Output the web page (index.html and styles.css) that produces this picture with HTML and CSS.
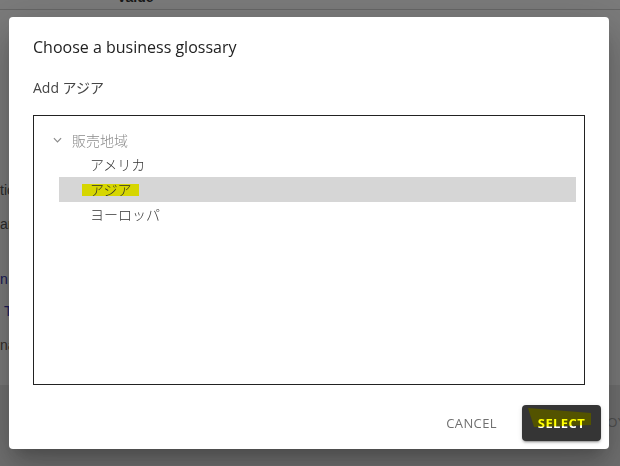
FILE: index.html
```html
<!DOCTYPE html>
<html lang="en">
<head>
<meta charset="utf-8">
<title>Choose a business glossary</title>
<link rel="stylesheet" href="styles.css">
</head>
<body>
<div class="page">
  <div class="table-head"><span class="col-value">Value</span></div>
  <div class="main">
    <div class="side">
      <span class="frag frag-1">tion</span>
      <span class="frag frag-2">ary</span>
      <span class="frag frag-3 link">n</span>
      <span class="frag frag-4 link">&nbsp;Type</span>
      <span class="frag frag-5">name</span>
    </div>
  </div>
  <div class="footer"><span class="deploy">DEPLOY</span></div>
</div>

<div class="overlay">
  <div class="dialog" role="dialog">
    <h2 class="dialog-title">Choose a business glossary</h2>
    <div class="dialog-content">
      <p class="add-line">Add アジア</p>
      <div class="tree">
        <div class="tree-parent">
          <svg class="chevron" viewBox="0 0 10 6" width="9" height="6"><path d="M1 1 L5 5 L9 1" fill="none" stroke="#8a8a8a" stroke-width="1.3"/></svg>
          <span>販売地域</span>
        </div>
        <div class="tree-children">
          <div class="tree-item">アメリカ</div>
          <div class="tree-item selected"><span class="mark">アジア</span></div>
          <div class="tree-item">ヨーロッパ</div>
        </div>
      </div>
    </div>
    <div class="dialog-actions">
      <button class="btn-text">CANCEL</button>
      <button class="btn-primary"><span class="btn-label">SELECT</span></button>
    </div>
  </div>
</div>
</body>
</html>
```

FILE: styles.css
```css
* { box-sizing: border-box; }

html, body {
  margin: 0;
  padding: 0;
  width: 620px;
  height: 466px;
  overflow: hidden;
}

body {
  font-family: "Liberation Sans", Arial, sans-serif;
  background: #f6f6f6;
}

/* ---------- underlying page ---------- */
.page {
  display: flex;
  flex-direction: column;
  height: 466px;
}

.table-head {
  height: 10px;
  border-bottom: 1px solid #cccccc;
  background: #f6f6f6;
  overflow: visible;
}

.col-value {
  display: block;
  margin-top: -11px;
  padding-left: 117px;
  font-size: 14px;
  line-height: 16px;
  font-weight: bold;
  color: #333;
}

.main {
  height: 375px;
  background: #f6f6f6;
}

.side {
  display: flex;
  flex-direction: column;
  align-items: flex-start;
  font-size: 14px;
  line-height: 16px;
  color: #555;
}

.frag { display: block; }
.frag-1 { margin-top: 172px; }
.frag-2 { margin-top: 18px; }
.frag-3 { margin-top: 39px; }
.frag-4 { margin-top: 16px; }
.frag-5 { margin-top: 18px; color: #6a5a50; }
.link { color: #3434b0; }

.footer {
  flex: 1;
  background: #e2e2e2;
  padding-left: 572px;
  padding-top: 28px;
  white-space: nowrap;
}

.deploy {
  font-size: 13px;
  line-height: 16px;
  color: #a2a2a2;
  letter-spacing: 0.3px;
}

/* ---------- modal ---------- */
.overlay {
  position: fixed;
  inset: 0;
  background: rgba(0, 0, 0, 0.5);
  display: flex;
  align-items: flex-start;
  padding: 17px 0 0 9px;
}

.dialog {
  width: 600px;
  height: 432px;
  background: #fff;
  border-radius: 4px;
  display: flex;
  flex-direction: column;
  box-shadow: 0 11px 15px -7px rgba(0,0,0,0.2),
              0 24px 38px 3px rgba(0,0,0,0.14),
              0 9px 46px 8px rgba(0,0,0,0.12);
  font-family: "Open Sans", "Noto Sans CJK JP", sans-serif;
}

.dialog-title {
  margin: 0;
  padding: 18px 24px 0;
  font-size: 16px;
  line-height: 24px;
  font-weight: 500;
  color: #222;
  height: 42px;
}

.dialog-content {
  padding: 19px 24px 0;
}

.add-line {
  margin: 0;
  height: 20px;
  font-size: 14px;
  line-height: 20px;
  color: #444;
}

.tree {
  margin-top: 17px;
  height: 270px;
  border: 1px solid #222;
  padding: 11px 8px 0 19px;
  font-family: "Noto Sans CJK JP", "Open Sans", sans-serif;
  font-size: 14px;
  font-weight: 300;
}

.tree-parent {
  display: flex;
  align-items: center;
  height: 25px;
  color: #8a8a8a;
}

.chevron {
  display: block;
  margin-right: 10px;
}

.tree-children {
  margin-left: 6px;
}

.tree-item {
  height: 25px;
  line-height: 24px;
  padding-left: 31px;
  color: #333;
}

.tree-item.selected {
  background: #d6d6d6;
}

.mark {
  display: inline-block;
  padding: 0 8px;
  margin-left: -8px;
  background: linear-gradient(#ffff00, #ffff00) center / 100% 12px no-repeat;
  mix-blend-mode: multiply;
  line-height: 25px;
}

.dialog-actions {
  display: flex;
  justify-content: flex-end;
  align-items: center;
  gap: 17px;
  padding: 20px 8px 8px;
}

.btn-text,
.btn-primary {
  font-family: "Open Sans", sans-serif;
  font-size: 13px;
  letter-spacing: 0.4px;
  border: 0;
  cursor: pointer;
}

.btn-text {
  background: none;
  padding: 0 8px;
  color: #707070;
  font-weight: 500;
  height: 36px;
}

.btn-primary {
  position: relative;
  width: 79px;
  height: 36px;
  border-radius: 4px;
  background: #353535;
  color: #fff;
  font-weight: 700;
  padding: 0;
  box-shadow: 0 3px 1px -2px rgba(0,0,0,0.2),
              0 2px 2px 0 rgba(0,0,0,0.14),
              0 1px 5px 0 rgba(0,0,0,0.12);
}

.btn-primary::before,
.btn-primary::after {
  content: "";
  position: absolute;
  left: 6px;
  top: 3px;
  width: 63px;
  height: 19px;
  clip-path: polygon(0 0, 100% 5px, 100% 17px, 6px 100%);
}

.btn-primary::before {
  background: #ffff00;
  mix-blend-mode: multiply;
}

.btn-primary::after {
  background: rgba(255, 255, 0, 0.15);
}
```
